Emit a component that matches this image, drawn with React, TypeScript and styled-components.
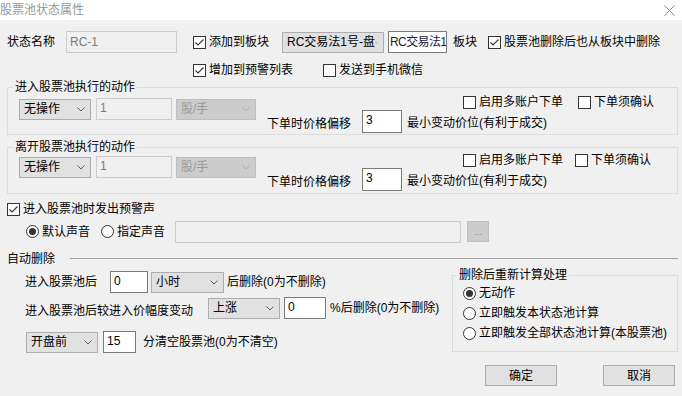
import React from "react";
import styled, { createGlobalStyle } from "styled-components";

const FONT = `"Liberation Sans", "Noto Sans CJK SC", sans-serif`;

const GlobalStyle = createGlobalStyle`
  html, body {
    margin: 0;
    padding: 0;
    background: #f0f0f0;
  }
  * {
    box-sizing: border-box;
  }
`;

export default function App() {
  return (
    <>
      <GlobalStyle />
      <Window>
        <TitleBar>
          <TitleText>股票池状态属性</TitleText>
          <svg width="11" height="11" viewBox="0 0 11 11">
            <path d="M0.5 0.5 L10.5 10.5 M10.5 0.5 L0.5 10.5" stroke="#8a8a8a" strokeWidth="1" />
          </svg>
        </TitleBar>
        <Body>
          <Row $mt={11} $h={22}>
            <Text>状态名称</Text>
            <TextBox $w={111} $ml={11} $disabled $center>RC-1</TextBox>
            <Check $ml={16} checked>添加到板块</Check>
            <Select $w={102} $ml={13}>RC交易法1号-盘</Select>
            <TextBox $w={59} $ml={4} $center $tight $ink="#1a1a40">RC交易法1</TextBox>
            <Text $ml={6}>板块</Text>
            <Check $ml={11} checked>股票池删除后也从板块中删除</Check>
          </Row>
          <Row $mt={10} $h={14} $pl={186}>
            <Check checked>增加到预警列表</Check>
            <Check $ml={30}>发送到手机微信</Check>
          </Row>

          <ActionGroup title="进入股票池执行的动作" mt={3} bodyMt={0} pb={1} confirmMl={15} />
          <ActionGroup title="离开股票池执行的动作" mt={5} bodyMt={-2} pb={2} confirmMl={12} />

          <Row $mt={8} $h={14}>
            <Check checked>进入股票池时发出预警声</Check>
          </Row>
          <Row $mt={4} $h={23} $pl={19}>
            <Radio checked>默认声音</Radio>
            <Radio $ml={11}>指定声音</Radio>
            <TextBox $w={286} $h={22} $ml={10} $disabled />
            <BrowseButton>...</BrowseButton>
          </Row>

          <SectionHeader>
            <Text>自动删除</Text>
            <SectionLine />
          </SectionHeader>

          <Split>
            <LeftCol>
              <Row $h={22} $pl={18}>
                <Text>进入股票池后</Text>
                <TextBox $w={38} $ml={13}>0</TextBox>
                <Select $w={73} $ml={3}>小时</Select>
                <Text $ml={3}>后删除(0为不删除)</Text>
              </Row>
              <Row $mt={4} $h={22} $pl={18}>
                <Text $dy={3}>进入股票池后较进入价幅度变动</Text>
                <Select $w={72} $ml={15}>上涨</Select>
                <TextBox $w={42} $ml={4}>0</TextBox>
                <Text $ml={4}>%后删除(0为不删除)</Text>
              </Row>
              <Row $mt={12} $h={22} $pl={19}>
                <Select $w={72}>开盘前</Select>
                <TextBox $w={33} $ml={5}>15</TextBox>
                <Text $ml={7}>分清空股票池(0为不清空)</Text>
              </Row>
            </LeftCol>
            <Group $mt={2} $w={226}>
              <GroupTitle $ml={4}>删除后重新计算处理</GroupTitle>
              <RadioList>
                <Radio checked>无动作</Radio>
                <Radio>立即触发本状态池计算</Radio>
                <Radio>立即触发全部状态池计算(本股票池)</Radio>
              </RadioList>
            </Group>
          </Split>

          <Footer>
            <Button>确定</Button>
            <Button>取消</Button>
          </Footer>
        </Body>
      </Window>
    </>
  );
}

function ActionGroup(props: { title: string; mt: number; bodyMt: number; pb: number; confirmMl: number }) {
  return (
    <Group $mt={props.mt}>
      <GroupTitle $ml={5}>{props.title}</GroupTitle>
      <GroupBody $mt={props.bodyMt} $pb={props.pb}>
        <Row $mt={4} $h={22} $pl={11}>
          <Select $w={72}>无操作</Select>
          <TextBox $w={76} $ml={5} $disabled>1</TextBox>
          <Select $w={80} $ml={4} disabled>股/手</Select>
        </Row>
        <RightArea>
          <Row $mt={1} $h={14} $pl={196}>
            <Check>启用多账户下单</Check>
            <Check $ml={props.confirmMl}>下单须确认</Check>
          </Row>
          <Row $mt={1} $h={23}>
            <Text $dy={2}>下单时价格偏移</Text>
            <TextBox $w={40} $h={23} $ml={11}>3</TextBox>
            <Text $ml={5} $dy={1}>最小变动价位(有利于成交)</Text>
          </Row>
        </RightArea>
      </GroupBody>
    </Group>
  );
}

function Select(props: { $w: number; $ml?: number; disabled?: boolean; children?: React.ReactNode }) {
  return (
    <Combo $w={props.$w} $ml={props.$ml} $disabled={props.disabled}>
      <span>{props.children}</span>
      <svg width="8" height="5" viewBox="0 0 8 5">
        <polyline
          points="0.5,0.5 4,4 7.5,0.5"
          fill="none"
          stroke={props.disabled ? "#b0b0b0" : "#606060"}
          strokeWidth="1"
        />
      </svg>
    </Combo>
  );
}

function Check(props: { $ml?: number; checked?: boolean; children: React.ReactNode }) {
  return (
    <Choice $ml={props.$ml}>
      <Box>
        {props.checked && (
          <svg width="11" height="11" viewBox="0 0 11 11">
            <polyline points="1.5,5.5 4,8 9.5,2.5" fill="none" stroke="#333" strokeWidth="1.1" />
          </svg>
        )}
      </Box>
      {props.children}
    </Choice>
  );
}

function Radio(props: { $ml?: number; checked?: boolean; children: React.ReactNode }) {
  return (
    <Choice $ml={props.$ml}>
      <RadioCircle>{props.checked && <RadioDot />}</RadioCircle>
      {props.children}
    </Choice>
  );
}

const Window = styled.div`
  width: 682px;
  height: 396px;
  background: #f0f0f0;
  font-family: ${FONT};
  font-size: 12px;
  line-height: 14px;
  color: #000;
  overflow: hidden;
`;

const TitleBar = styled.div`
  height: 20px;
  background: #fff;
  display: flex;
  align-items: center;
  justify-content: space-between;
  padding: 0 7px 0 0;
`;

const TitleText = styled.span`
  color: #999;
`;

const Body = styled.div`
  padding: 0 4px 0 7px;
`;

const Row = styled.div<{ $mt?: number; $pl?: number; $h?: number }>`
  display: flex;
  align-items: center;
  flex: none;
  margin-top: ${(p) => p.$mt ?? 0}px;
  padding-left: ${(p) => p.$pl ?? 0}px;
  height: ${(p) => p.$h ?? 22}px;
`;

const Text = styled.span<{ $ml?: number; $dy?: number }>`
  margin-left: ${(p) => p.$ml ?? 0}px;
  margin-top: ${(p) => (p.$dy ?? 0) * 2}px;
  white-space: nowrap;
  flex: none;
`;

const TextBox = styled.div<{
  $w: number;
  $h?: number;
  $ml?: number;
  $disabled?: boolean;
  $center?: boolean;
  $tight?: boolean;
  $ink?: string;
}>`
  width: ${(p) => p.$w}px;
  height: ${(p) => p.$h ?? 22}px;
  margin-left: ${(p) => p.$ml ?? 0}px;
  flex: none;
  display: flex;
  align-items: ${(p) => (p.$center ? "center" : "flex-start")};
  padding: ${(p) => (p.$center ? `0 ${p.$tight ? 1 : 3}px` : "2px 3px 0")};
  letter-spacing: ${(p) => (p.$tight ? "-0.6px" : "normal")};
  border: 1px solid ${(p) => (p.$disabled ? "#cccccc" : "#7a7a7a")};
  background: ${(p) => (p.$disabled ? "#f0f0f0" : "#fff")};
  color: ${(p) => (p.$disabled ? "#7a7a7a" : p.$ink ?? "#000")};
  white-space: nowrap;
  overflow: hidden;
`;

const Combo = styled.div<{ $w: number; $ml?: number; $disabled?: boolean }>`
  width: ${(p) => p.$w}px;
  height: 21px;
  margin-left: ${(p) => p.$ml ?? 0}px;
  flex: none;
  display: flex;
  align-items: center;
  justify-content: space-between;
  padding: 0 5px 0 4px;
  border: 1px solid ${(p) => (p.$disabled ? "#bfbfbf" : "#adadad")};
  background: ${(p) => (p.$disabled ? "#cccccc" : "#e1e1e1")};
  color: ${(p) => (p.$disabled ? "#9a9a9a" : "#000")};
  white-space: nowrap;
  overflow: hidden;
`;

const Choice = styled.label<{ $ml?: number }>`
  display: inline-flex;
  align-items: center;
  flex: none;
  margin-left: ${(p) => p.$ml ?? 0}px;
  white-space: nowrap;
`;

const Box = styled.span`
  width: 13px;
  height: 13px;
  flex: none;
  margin-right: 3px;
  border: 1px solid #333;
  background: #fff;
  display: flex;
  align-items: center;
  justify-content: center;
`;

const RadioCircle = styled.span`
  width: 13px;
  height: 13px;
  flex: none;
  margin-right: 3px;
  border: 1px solid #333;
  border-radius: 50%;
  background: #fff;
  display: flex;
  align-items: center;
  justify-content: center;
`;

const RadioDot = styled.span`
  width: 7px;
  height: 7px;
  border-radius: 50%;
  background: #333;
`;

const Group = styled.fieldset<{ $mt?: number; $w?: number }>`
  margin: ${(p) => p.$mt ?? 0}px 0 0;
  padding: 0;
  border: 1px solid #dcdcdc;
  min-width: 0;
  flex: none;
  width: ${(p) => (p.$w ? `${p.$w}px` : "auto")};
`;

const GroupTitle = styled.legend<{ $ml: number }>`
  margin-left: ${(p) => p.$ml}px;
  padding: 0 2px;
  line-height: 14px;
`;

const GroupBody = styled.div<{ $mt: number; $pb: number }>`
  display: flex;
  align-items: flex-start;
  margin-top: ${(p) => p.$mt}px;
  padding-bottom: ${(p) => p.$pb}px;
`;

const RightArea = styled.div`
  display: flex;
  flex-direction: column;
  margin-left: 11px;
`;

const BrowseButton = styled.div`
  width: 22px;
  height: 21px;
  margin-left: 6px;
  flex: none;
  display: flex;
  align-items: center;
  justify-content: center;
  border: 1px solid #bfbfbf;
  background: #cccccc;
  color: #8a8a9a;
  font-size: 9px;
`;

const SectionHeader = styled.div`
  display: flex;
  align-items: center;
  height: 14px;
  margin-top: 9px;
`;

const SectionLine = styled.div`
  flex: 1;
  height: 1px;
  margin-left: 15px;
  margin-top: -1px;
  background: #a0a0a0;
`;

const Split = styled.div`
  display: flex;
  align-items: flex-start;
`;

const LeftCol = styled.div`
  flex: 1;
  padding-top: 5px;
`;

const RadioList = styled.div`
  display: flex;
  flex-direction: column;
  gap: 6px;
  padding: 4px 0 11px 10px;

  & > label {
    height: 14px;
  }
`;

const Footer = styled.div`
  display: flex;
  justify-content: flex-end;
  gap: 46px;
  margin-top: 12px;
  padding-right: 3px;
`;

const Button = styled.div`
  width: 72px;
  height: 21px;
  display: flex;
  align-items: center;
  justify-content: center;
  border: 1px solid #adadad;
  background: #e1e1e1;
`;
